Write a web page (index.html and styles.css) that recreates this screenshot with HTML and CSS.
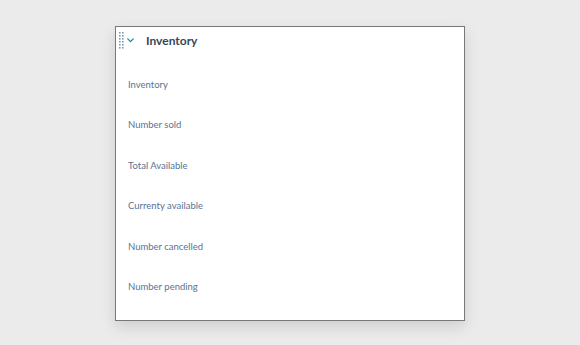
FILE: index.html
```html
<!DOCTYPE html>
<html>
<head>
<meta charset="utf-8">
<link rel="stylesheet" href="styles.css">
</head>
<body>
<div class="card">
  <div class="header">
    <svg class="handle" width="5" height="17" viewBox="0 0 5 17">
      <g fill="#7c98b6">
        <rect x="0" y="0" width="1.6" height="1.6"/><rect x="3" y="0" width="1.6" height="1.6"/>
        <rect x="0" y="3" width="1.6" height="1.6"/><rect x="3" y="3" width="1.6" height="1.6"/>
        <rect x="0" y="6" width="1.6" height="1.6"/><rect x="3" y="6" width="1.6" height="1.6"/>
        <rect x="0" y="9" width="1.6" height="1.6"/><rect x="3" y="9" width="1.6" height="1.6"/>
        <rect x="0" y="12" width="1.6" height="1.6"/><rect x="3" y="12" width="1.6" height="1.6"/>
        <rect x="0" y="15" width="1.6" height="1.6"/><rect x="3" y="15" width="1.6" height="1.6"/>
      </g>
    </svg>
    <svg class="chev" width="7" height="5" viewBox="0 0 7 5"><path d="M0.8 0.9 L3.5 3.6 L6.2 0.9" fill="none" stroke="#0091ae" stroke-width="1.3" stroke-linecap="round" stroke-linejoin="round"/></svg>
    <span class="title">Inventory</span>
  </div>
  <ul class="list">
    <li>Inventory</li>
    <li>Number sold</li>
    <li>Total Available</li>
    <li>Currenty available</li>
    <li>Number cancelled</li>
    <li>Number pending</li>
  </ul>
</div>
</body>
</html>
```
FILE: styles.css
```css
html, body { margin: 0; padding: 0; }
body {
  background: #ebebeb;
  width: 580px;
  height: 345px;
  box-sizing: border-box;
  padding: 26px 0 0 115px;
  font-family: "Lato", "Liberation Sans", sans-serif;
}
.card {
  width: 350px;
  height: 295px;
  box-sizing: border-box;
  background: #fff;
  border: 1px solid #787878;
  box-shadow: 0 6px 14px rgba(0,0,0,0.12);
}
.header {
  height: 27px;
  display: flex;
  align-items: center;
  padding-left: 3px;
}
.chev { margin-left: 3px; }
.title {
  margin-left: 12px;
  font-size: 12px;
  font-weight: 700;
  color: #33475b;
}
.list {
  list-style: none;
  margin: 11px 0 0 0;
  padding: 0 0 0 12px;
}
.list li {
  height: 40.4px;
  line-height: 40.4px;
  font-size: 9.5px;
  color: #5a7394;
}
```
